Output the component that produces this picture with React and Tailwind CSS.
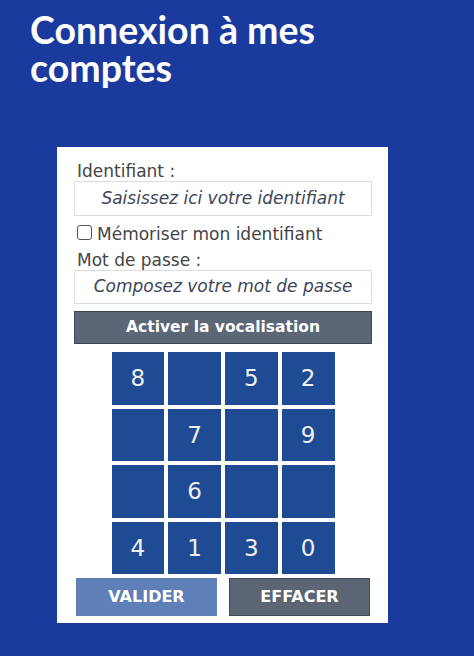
const keys = ["8", "", "5", "2", "", "7", "", "9", "", "6", "", "", "4", "1", "3", "0"];

const App = () => {
  return (
    <div className="min-h-screen h-[656px] bg-[#1a3b9d] overflow-hidden">
      <h1 className="pl-[30px] pt-[11px] text-white font-bold text-[37.5px] leading-[38px] font-['Lato',sans-serif]">
        Connexion à mes
        <br />
        comptes
      </h1>

      <div className="ml-[57px] mt-[60px] w-[331px] bg-white pt-[15px] pb-[7px] pl-[17px] pr-[16px] text-[17px] font-['DejaVu_Sans',Verdana,sans-serif]">
        <div className="pl-[3px] leading-[19px] text-[#444]">Identifiant :</div>
        <div className="h-[35px] border border-[#ddd] flex items-center justify-center italic text-[#3d4658]">
          Saisissez ici votre identifiant
        </div>

        <label className="mt-[8px] flex items-start gap-[5px] pl-[3px] leading-[20px] text-[#444]">
          <span className="mt-[1px] w-[15px] h-[15px] border border-[#555] rounded-[3px] bg-white"></span>
          Mémoriser mon identifiant
        </label>

        <div className="mt-[6px] pl-[3px] leading-[20px] text-[#444]">Mot de passe :</div>
        <div className="h-[34px] border border-[#ddd] flex items-center justify-center italic text-[#3d4658]">
          Composez votre mot de passe
        </div>

        <button className="mt-[7px] w-full h-[33px] bg-[#5b6677] border border-[#3e4654] text-white font-bold text-[15.5px]">
          Activer la vocalisation
        </button>

        <div className="mt-[8px] mx-auto w-[223px] grid grid-cols-4 gap-[4px]">
          {keys.map((k, i) => (
            <div key={i} className="h-[52.5px] bg-[#1f4a94] flex items-center justify-center text-[#f0f0f0] text-[23px]">
              {k}
            </div>
          ))}
        </div>

        <div className="mt-[4px] flex justify-between px-[2px]">
          <button className="w-[141px] h-[38px] bg-[#5f7fb8] text-white font-bold text-[16px]">VALIDER</button>
          <button className="w-[141px] h-[38px] bg-[#5c6573] border border-[#444b57] text-white font-bold text-[16px]">EFFACER</button>
        </div>
      </div>
    </div>
  );
};

export default App;
